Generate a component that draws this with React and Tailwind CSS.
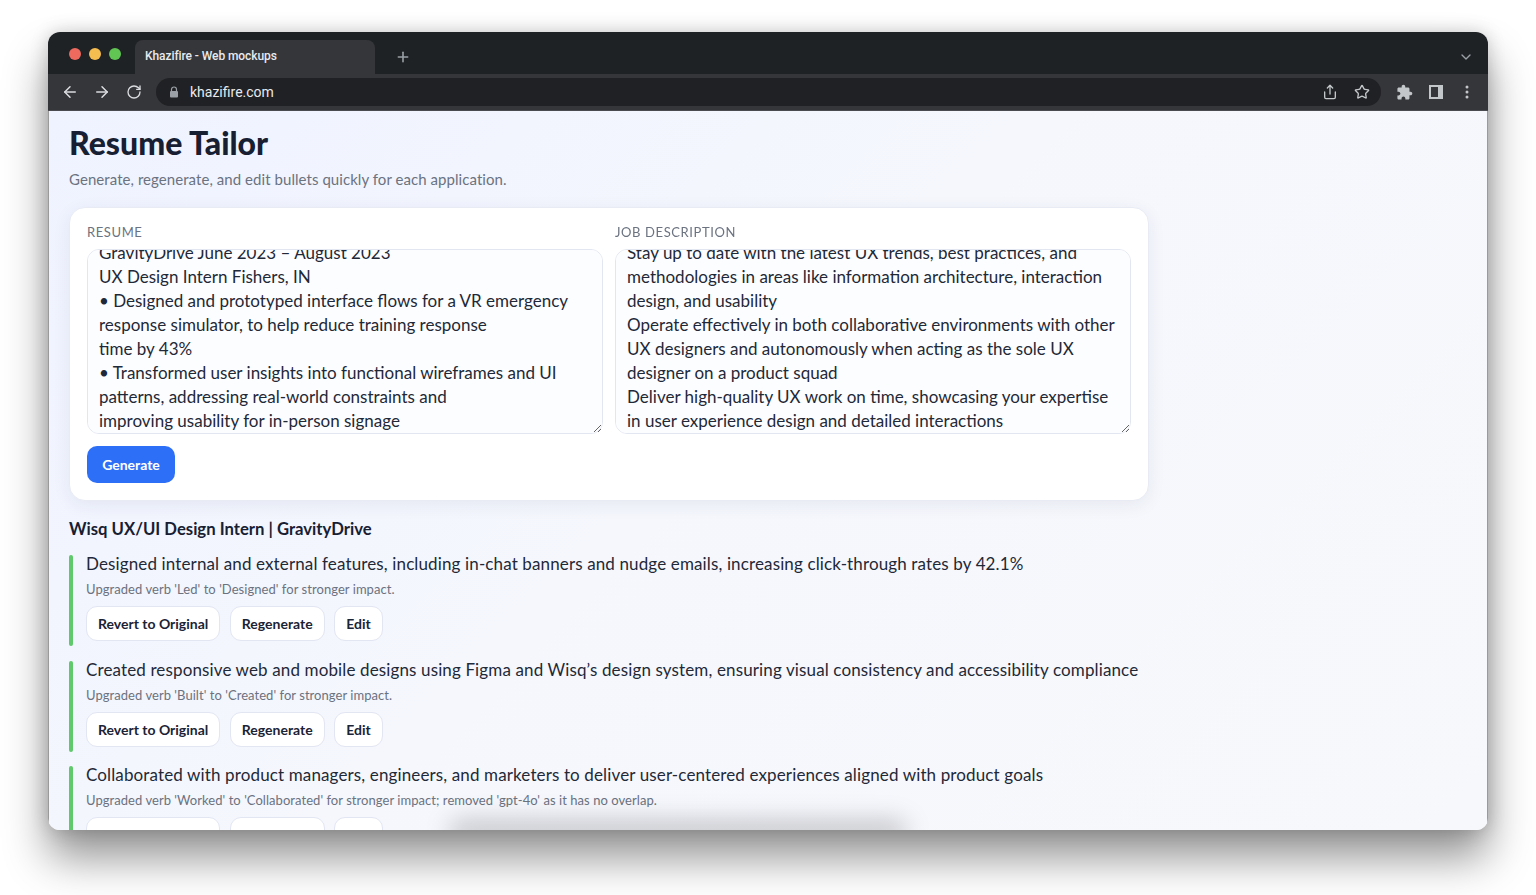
import React, { useEffect, useRef } from "react";
import { ArrowLeft, ArrowRight, RotateCw, Plus, ChevronDown, Share, Star } from "lucide-react";

const resumeText = `Product Designer Intern
Wisq June 2024 – August 2024
• Led internal and external features, including in-chat banners and nudge emails
• Built responsive web and mobile designs
GravityDrive June 2023 – August 2023
UX Design Intern Fishers, IN
• Designed and prototyped interface flows for a VR emergency response simulator, to help reduce training response
time by 43%
• Transformed user insights into functional wireframes and UI patterns, addressing real-world constraints and
improving usability for in-person signage`;

const jobText = `Responsibilities
Collaborate with product managers and engineers to ship features
Stay up to date with the latest UX trends, best practices, and methodologies in areas like information architecture, interaction design, and usability
Operate effectively in both collaborative environments with other UX designers and autonomously when acting as the sole UX designer on a product squad
Deliver high-quality UX work on time, showcasing your expertise in user experience design and detailed interactions`;

const bullets = [
  {
    text: "Designed internal and external features, including in-chat banners and nudge emails, increasing click-through rates by 42.1%",
    note: "Upgraded verb 'Led' to 'Designed' for stronger impact.",
  },
  {
    text: "Created responsive web and mobile designs using Figma and Wisq’s design system, ensuring visual consistency and accessibility compliance",
    note: "Upgraded verb 'Built' to 'Created' for stronger impact.",
  },
  {
    text: "Collaborated with product managers, engineers, and marketers to deliver user-centered experiences aligned with product goals",
    note: "Upgraded verb 'Worked' to 'Collaborated' for stronger impact; removed 'gpt-4o' as it has no overlap.",
  },
];

// textareas in the shot are scrolled to the end
const Field = ({ label, value }) => {
  const ref = useRef(null);
  useEffect(() => {
    if (ref.current) ref.current.scrollTop = ref.current.scrollHeight;
  }, []);
  return (
    <div className="flex-1 min-w-0">
      <div className="text-[13px] leading-[16px] tracking-[0.6px] uppercase text-[#6b7280] mb-[9px]">{label}</div>
      <textarea
        ref={ref}
        readOnly
        value={value}
        className="block w-full h-[185px] pl-[11px] pr-[11px] pt-[8px] pb-0 rounded-[12px] border border-[#e2e6f0] bg-[#fcfdff] text-[#1f2937] text-[17px] leading-[24px] outline-none resize-y [scrollbar-width:none]"
      />
    </div>
  );
};

const Btn = ({ children }) => (
  <button className="h-[35px] px-[11px] rounded-[11px] border border-[#e2e6f2] bg-white text-[14px] font-bold text-[#1b2336]">
    {children}
  </button>
);

const Bullet = ({ text, note }) => (
  <div className="flex gap-[13px] h-[91px] shrink-0">
    <div className="w-[4px] rounded-full bg-[#5fc96b]" />
    <div>
      <div className="text-[17px] leading-[18px] tracking-[0.13px] text-[#1f2937] whitespace-nowrap">{text}</div>
      <div className="mt-[8px] text-[13px] leading-[16px] tracking-[0.05px] text-[#6b7280] whitespace-nowrap">{note}</div>
      <div className="mt-[9px] flex gap-[9.5px]">
        <Btn>Revert to Original</Btn>
        <Btn>Regenerate</Btn>
        <Btn>Edit</Btn>
      </div>
    </div>
  </div>
);

const App = () => {
  return (
    <div className="h-[895px] bg-white pt-[32px] px-[48px] overflow-hidden font-['Lato',sans-serif]">
      <div className="relative h-[798px] rounded-[12px] overflow-hidden flex flex-col shadow-[0_28px_44px_rgba(0,0,0,0.42),0_0_18px_rgba(0,0,0,0.18)]">
        {/* tab strip */}
        <div className="h-[42px] bg-[#1f2225] flex items-end pl-[87px] pr-[16px] shrink-0 relative font-['Roboto',sans-serif]">
          <div className="absolute left-[21px] top-[16px] flex gap-[8px]">
            <span className="w-[12px] h-[12px] rounded-full bg-[#ee6a5f]" />
            <span className="w-[12px] h-[12px] rounded-full bg-[#f5bd4f]" />
            <span className="w-[12px] h-[12px] rounded-full bg-[#61c554]" />
          </div>
          <div className="w-[240px] h-[34px] bg-[#35363a] rounded-t-[8px] flex items-center pl-[10px] pb-[2px] text-[12px] tracking-[-0.08px] font-medium text-[#e8eaed]">
            Khazifire - Web mockups
          </div>
          <Plus size={16} strokeWidth={2.4} className="ml-[20px] mb-[9px] text-[#9aa0a6]" />
          <ChevronDown size={16} className="ml-auto mb-[9px] -mr-[2px] text-[#9aa0a6]" />
        </div>
        {/* toolbar */}
        <div className="h-[37px] bg-[#35363a] flex items-center pl-[13px] pr-[19px] shrink-0 border-b border-[#4a4b50] font-['Roboto',sans-serif]">
          <ArrowLeft size={18} className="text-[#dadce0]" />
          <ArrowRight size={18} className="ml-[14px] text-[#dadce0]" />
          <RotateCw size={16} className="ml-[15px] text-[#dadce0]" />
          <div className="ml-[14px] flex-1 h-[28px] rounded-full bg-[#202124] flex items-center pl-[13px] pr-[11px]">
            <svg width="10" height="12" viewBox="0 0 10 12">
              <path d="M2.5 5V3.5a2.5 2.5 0 0 1 5 0V5" fill="none" stroke="#9aa0a6" strokeWidth="1.2" />
              <rect x="1" y="5" width="8" height="6.5" rx="1" fill="#9aa0a6" />
            </svg>
            <span className="ml-[11px] text-[14px] text-[#e8eaed]">khazifire.com</span>
            <Share size={16} className="ml-auto text-[#c4c7ca]" />
            <Star size={16} className="ml-[16px] text-[#c4c7ca]" />
          </div>
          <svg width="17" height="17" viewBox="0 0 24 24" className="ml-[15px]">
            <path
              d="M20.5 11H19V7c0-1.1-.9-2-2-2h-4V3.5C13 2.12 11.88 1 10.5 1S8 2.12 8 3.5V5H4c-1.1 0-1.99.9-1.99 2v3.8H3.5c1.49 0 2.7 1.21 2.7 2.7s-1.21 2.7-2.7 2.7H2V20c0 1.1.9 2 2 2h3.8v-1.5c0-1.49 1.21-2.7 2.7-2.7 1.49 0 2.7 1.21 2.7 2.7V22H17c1.1 0 2-.9 2-2v-4h1.5c1.38 0 2.5-1.12 2.5-2.5S21.88 11 20.5 11z"
              fill="#c4c7ca"
            />
          </svg>
          <svg width="14" height="14" viewBox="0 0 14 14" className="ml-[16px]">
            <path d="M0 0h14v14H0z M2 2v10h7V2z" fill="#c4c7ca" fillRule="evenodd" />
          </svg>
          <svg width="4" height="14" viewBox="0 0 4 14" className="ml-[22px]">
            <circle cx="2" cy="2" r="1.5" fill="#c4c7ca" />
            <circle cx="2" cy="7" r="1.5" fill="#c4c7ca" />
            <circle cx="2" cy="12" r="1.5" fill="#c4c7ca" />
          </svg>
        </div>
        {/* page */}
        <div className="relative flex-1 overflow-hidden border-x border-[#9a9a9a] bg-[linear-gradient(135deg,#eff3ff_0%,#f5f7fd_45%,#f7f8fb_100%)] pt-[16px] px-[20px]">
          <h1 className="text-[32px] leading-[32px] font-black text-[#172033]">Resume Tailor</h1>
          <p className="mt-[10px] text-[15px] leading-[20px] tracking-[0.06px] text-[#6b7280]">
            Generate, regenerate, and edit bullets quickly for each application.
          </p>
          <div className="mt-[18px] w-[1080px] h-[294px] rounded-[16px] bg-white border border-[#e8ebf4] shadow-[0_4px_18px_rgba(30,40,80,0.07)] px-[17px] pt-[16px]">
            <div className="flex gap-[12px]">
              <Field label="Resume" value={resumeText} />
              <Field label="Job Description" value={jobText} />
            </div>
            <button className="mt-[12px] h-[37px] w-[88px] rounded-[10px] bg-[#2d6ff6] text-white text-[14px] font-bold">
              Generate
            </button>
          </div>
          <h2 className="mt-[18px] text-[16.7px] leading-[20px] font-bold text-[#172033]">Wisq UX/UI Design Intern | GravityDrive</h2>
          <div className="mt-[16px] flex flex-col gap-[14.5px]">
            {bullets.map((b) => (
              <Bullet key={b.text} text={b.text} note={b.note} />
            ))}
          </div>
          <div className="absolute left-[400px] right-[580px] -bottom-[14px] h-[24px] rounded-full bg-black/20 blur-[12px]" />
        </div>
      </div>
    </div>
  );
};

export default App;
